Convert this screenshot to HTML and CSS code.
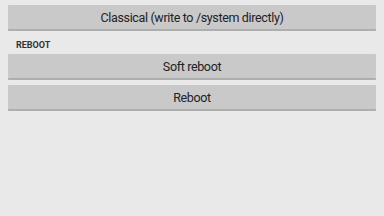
FILE: index.html
```html
<!DOCTYPE html>
<html lang="en">
<head>
	<meta charset="UTF-8">
	<meta name="viewport" content="width=device-width, initial-scale=1.0">
	<title>Install mode</title>
	<link rel="stylesheet" href="styles.css">
</head>
<body>
	<div class="screen">
		<button class="btn-option">Classical (write to /system directly)</button>
		<div class="section-title">REBOOT</div>
		<div class="list-btn">
			<button class="btn-option">Soft reboot</button>
			<button class="btn-option">Reboot</button>
		</div>
	</div>
</body>
</html>
```

FILE: styles.css
```css
html, body{ margin: 0; padding: 0; background-color: #e9e9e9;}
body{ width: 384px; height: 216px; overflow: hidden;}
.screen{
	display: flex; flex-direction: column; padding: 5px 8px 0;
	font-family: Roboto, "Liberation Sans", sans-serif;
}
.btn-option{
	display: block; width: 100%; height: 26px; margin: 0; padding: 1px 0 0;
	border: 0; border-bottom: 2px solid #aeaeae; border-radius: 1px;
	background-color: #c9c9c9; color: #222;
	font-family: inherit; font-size: 12.5px; letter-spacing: -0.35px;
	line-height: 23px; text-align: center;
}
.section-title{
	padding: 9px 0 0 8px; height: 14px;
	font-size: 9px; font-weight: bold; color: #333; line-height: 10px;
}
.list-btn{ display: flex; flex-direction: column; gap: 5px;}
```
